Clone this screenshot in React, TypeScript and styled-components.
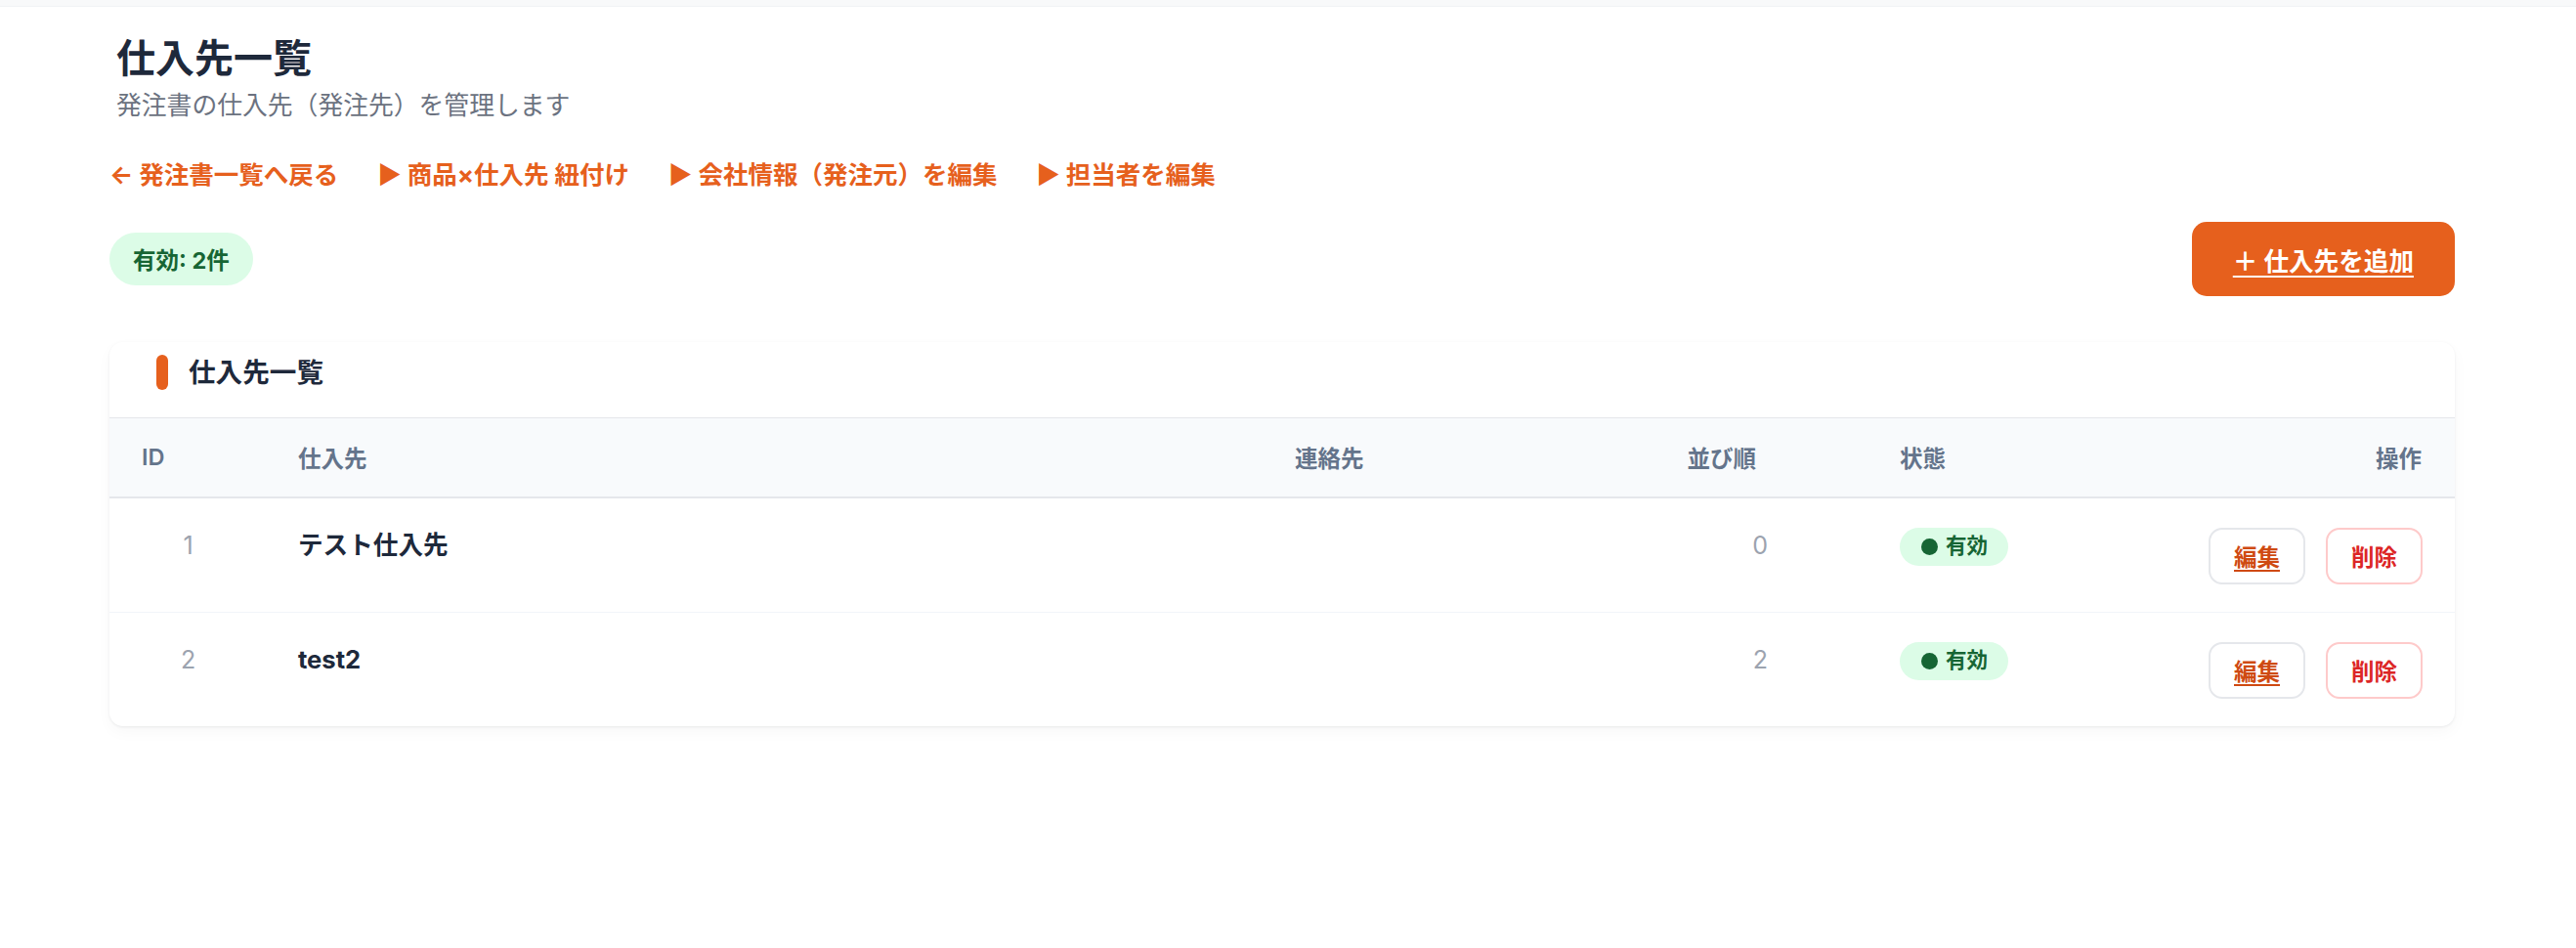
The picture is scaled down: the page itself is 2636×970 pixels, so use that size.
import React from 'react';
import styled, { createGlobalStyle } from 'styled-components';

const ORANGE = '#e6601d';

const GlobalStyle = createGlobalStyle`
  html, body { margin: 0; padding: 0; background: #ffffff; }
  body {
    font-family: Inter, "Noto Sans CJK JP", "Noto Sans", sans-serif;
    color: #1f2937;
    -webkit-font-smoothing: antialiased;
  }
  * { box-sizing: border-box; }
`;

const TopStrip = styled.div`
  height: 7px;
  background: #f8f9fa;
  border-bottom: 1px solid #f1f3f5;
`;

const Page = styled.main`
  width: 2400px;
  margin-left: 112px;
  padding-top: 29px;
  padding-bottom: 60px;
  display: flex;
  flex-direction: column;
`;

const PageHeader = styled.header`
  padding-left: 7px;
`;

const Title = styled.h1`
  margin: 0;
  font-size: 40px;
  line-height: 48px;
  font-weight: 700;
  color: #1e293b;
`;

const Subtitle = styled.p`
  margin: 5px 0 0;
  font-size: 25.8px;
  line-height: 38px;
  color: #6b7280;
`;

const LinkBar = styled.nav`
  margin-top: 33px;
  display: flex;
  gap: 40px;
`;

const NavLink = styled.a`
  font-size: 25.5px;
  line-height: 38px;
  font-weight: 700;
  color: ${ORANGE};
  text-decoration: none;
  white-space: nowrap;
`;

const ActionRow = styled.div`
  margin-top: 29px;
  display: flex;
  justify-content: space-between;
  align-items: center;
`;

const CountBadge = styled.span`
  display: inline-flex;
  align-items: center;
  height: 54px;
  padding: 0 24px;
  border-radius: 999px;
  background: #dcfce7;
  color: #166534;
  font-size: 23.5px;
  font-weight: 700;
`;

const AddButton = styled.button`
  height: 76px;
  padding: 0 42px;
  border: none;
  border-radius: 15px;
  background: ${ORANGE};
  color: #ffffff;
  font-family: inherit;
  font-size: 25.6px;
  font-weight: 700;
  text-decoration: underline;
  text-underline-offset: 5px;
  text-decoration-thickness: 2px;
  cursor: pointer;
`;

const Card = styled.section`
  margin-top: 47px;
  background: #ffffff;
  border-radius: 14px;
  box-shadow: 0 1px 3px rgba(15, 23, 42, 0.07), 0 6px 16px rgba(15, 23, 42, 0.03);
  overflow: hidden;
`;

const CardHeader = styled.div`
  display: flex;
  align-items: center;
  gap: 21px;
  padding: 13px 0 28px 48px;
`;

const AccentBar = styled.span`
  width: 12px;
  height: 36px;
  border-radius: 6px;
  background: ${ORANGE};
`;

const CardTitle = styled.h2`
  margin: 0;
  font-size: 27.6px;
  line-height: 36px;
  font-weight: 700;
  color: #1e293b;
`;

const Table = styled.table`
  width: 100%;
  border-collapse: collapse;
  table-layout: fixed;
`;

const HeadRow = styled.tr`
  border-top: 1px solid #e5e7eb;
  border-bottom: 2px solid #e5e7eb;
`;

type CellProps = { $align?: 'left' | 'center' | 'right'; $pl?: number; $pr?: number };

const Th = styled.th<CellProps>`
  height: 81px;
  padding: 0 ${(p) => p.$pr ?? 0}px 0 ${(p) => p.$pl ?? 0}px;
  background: #f8fafc;
  text-align: ${(p) => p.$align ?? 'left'};
  vertical-align: middle;
  font-size: 23.5px;
  font-weight: 600;
  color: #64748b;
`;

const BodyRow = styled.tr`
  border-bottom: 1px solid #f1f5f9;
  &:last-child { border-bottom: none; }
`;

const Td = styled.td<CellProps>`
  padding: 30px ${(p) => p.$pr ?? 0}px 28px ${(p) => p.$pl ?? 0}px;
  text-align: ${(p) => p.$align ?? 'left'};
  vertical-align: top;
  line-height: 36px;
`;

const MutedNum = styled.span`
  font-size: 25px;
  color: #9ca3af;
`;

const SupplierName = styled.span`
  font-size: 25.6px;
  font-weight: 700;
  color: #1e293b;
`;

const StatusPill = styled.span`
  display: inline-flex;
  align-items: center;
  gap: 8px;
  height: 39px;
  padding: 0 21px 0 22px;
  border-radius: 999px;
  background: #dcfce7;
  color: #166534;
  font-size: 21.5px;
  font-weight: 700;
  line-height: 1;
  vertical-align: top;
`;

const StatusDot = styled.span`
  width: 17px;
  height: 17px;
  border-radius: 50%;
  background: #166534;
`;

const ActionGroup = styled.div`
  display: flex;
  justify-content: flex-end;
  gap: 21px;
`;

const RowButton = styled.button<{ $variant: 'edit' | 'delete' }>`
  height: 58px;
  padding: 0 24px;
  border-radius: 14px;
  background: #ffffff;
  border: 2px solid ${(p) => (p.$variant === 'edit' ? '#e5e7eb' : '#fecaca')};
  color: ${(p) => (p.$variant === 'edit' ? '#cf4a12' : '#dc2626')};
  text-decoration: ${(p) => (p.$variant === 'edit' ? 'underline' : 'none')};
  text-underline-offset: 4px;
  font-family: inherit;
  font-size: 23.5px;
  font-weight: 600;
  cursor: pointer;
`;

const suppliers = [
  { id: 1, name: 'テスト仕入先', contact: '', order: 0 },
  { id: 2, name: 'test2', contact: '', order: 2 },
];

const links = ['← 発注書一覧へ戻る', '▶ 商品×仕入先 紐付け', '▶ 会社情報（発注元）を編集', '▶ 担当者を編集'];

export default function App() {
  return (
    <>
      <GlobalStyle />
      <TopStrip />
      <Page>
        <PageHeader>
          <Title>仕入先一覧</Title>
          <Subtitle>発注書の仕入先（発注先）を管理します</Subtitle>
        </PageHeader>
        <LinkBar>
          {links.map((l) => (
            <NavLink key={l} href="#">
              {l}
            </NavLink>
          ))}
        </LinkBar>
        <ActionRow>
          <CountBadge>有効: 2件</CountBadge>
          <AddButton>＋ 仕入先を追加</AddButton>
        </ActionRow>
        <Card>
          <CardHeader>
            <AccentBar />
            <CardTitle>仕入先一覧</CardTitle>
          </CardHeader>
          <Table>
            <colgroup>
              <col style={{ width: 161 }} />
              <col style={{ width: 1020 }} />
              <col style={{ width: 307 }} />
              <col style={{ width: 312 }} />
              <col style={{ width: 268 }} />
              <col style={{ width: 332 }} />
            </colgroup>
            <thead>
              <HeadRow>
                <Th $pl={33}>ID</Th>
                <Th $pl={32}>仕入先</Th>
                <Th $pl={32}>連絡先</Th>
                <Th $align="right" $pr={115}>並び順</Th>
                <Th $pl={32}>状態</Th>
                <Th $align="right" $pr={34}>操作</Th>
              </HeadRow>
            </thead>
            <tbody>
              {suppliers.map((s) => (
                <BodyRow key={s.id}>
                  <Td $align="center">
                    <MutedNum>{s.id}</MutedNum>
                  </Td>
                  <Td $pl={32}>
                    <SupplierName>{s.name}</SupplierName>
                  </Td>
                  <Td $pl={32}>{s.contact}</Td>
                  <Td $align="right" $pr={103}>
                    <MutedNum>{s.order}</MutedNum>
                  </Td>
                  <Td $pl={32}>
                    <StatusPill>
                      <StatusDot />
                      有効
                    </StatusPill>
                  </Td>
                  <Td $pr={33}>
                    <ActionGroup>
                      <RowButton $variant="edit">編集</RowButton>
                      <RowButton $variant="delete">削除</RowButton>
                    </ActionGroup>
                  </Td>
                </BodyRow>
              ))}
            </tbody>
          </Table>
        </Card>
      </Page>
    </>
  );
}
